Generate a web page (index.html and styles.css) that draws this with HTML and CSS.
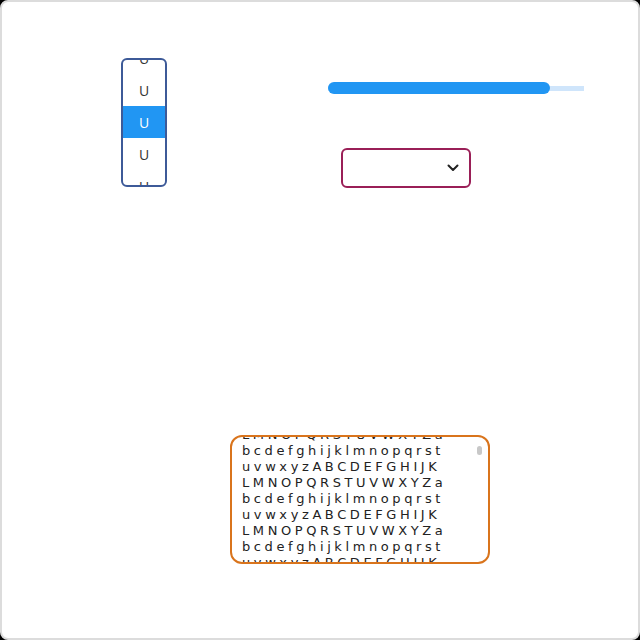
FILE: index.html
```html
<!DOCTYPE html>
<html>
<head>
<meta charset="utf-8">
<link rel="stylesheet" href="styles.css">
</head>
<body>
<div class="frame">
  <div class="top">
    <div class="listbox">
      <div class="options">
        <div class="opt">U</div>
        <div class="opt">U</div>
        <div class="opt sel">U</div>
        <div class="opt">U</div>
        <div class="opt">U</div>
      </div>
    </div>
    <div class="right">
      <div class="progress">
        <div class="fill" style="width: 222px"></div>
      </div>
      <div class="select">
        <svg class="chev" width="12" height="8" viewBox="0 0 12 8"><path d="M1.5 1.5 L6 6 L10.5 1.5" fill="none" stroke="#222" stroke-width="2" stroke-linecap="round" stroke-linejoin="round"/></svg>
      </div>
    </div>
  </div>
  <div class="textarea">
    <div class="text">LMNOPQRSTUVWXYZa<br>bcdefghijklmnopqrst<br>uvwxyzABCDEFGHIJK<br>LMNOPQRSTUVWXYZa<br>bcdefghijklmnopqrst<br>uvwxyzABCDEFGHIJK<br>LMNOPQRSTUVWXYZa<br>bcdefghijklmnopqrst<br>uvwxyzABCDEFGHIJK</div>
    <div class="thumb"></div>
  </div>
</div>
</body>
</html>
```

FILE: styles.css
```css
html { background: #000; }
body { margin: 0; }
.frame {
  box-sizing: border-box;
  width: 640px;
  height: 640px;
  background: #fff;
  border: 2px solid #dcdcdc;
  border-radius: 8px;
  overflow: hidden;
}
.top {
  display: flex;
  align-items: flex-start;
  margin-top: 56px;
  padding-left: 119px;
}
.listbox {
  box-sizing: border-box;
  width: 46px;
  height: 129px;
  border: 2px solid #3d5a98;
  border-radius: 6px;
  overflow: hidden;
}
.options { margin-top: -18px; }
.opt {
  height: 32px;
  display: flex;
  align-items: center;
  justify-content: center;
  font-family: "Open Sans", sans-serif;
  font-size: 14px;
  color: #333;
}
.opt.sel { background: #2196f3; color: #fff; }
.right {
  margin-left: 161px;
  padding-top: 24px;
}
.progress {
  width: 256px;
  height: 12px;
  display: flex;
  align-items: center;
  background: linear-gradient(#fff 4px, #cfe5fb 4px, #cfe5fb 9px, #fff 9px);
}
.fill {
  height: 12px;
  background: #2196f3;
  border-radius: 6px;
}
.select {
  box-sizing: border-box;
  width: 130px;
  height: 40px;
  margin-top: 54px;
  margin-left: 13px;
  border: 2px solid #9a1f57;
  border-radius: 6px;
  display: flex;
  align-items: center;
  justify-content: flex-end;
  padding-right: 10px;
}
.chev { display: block; }
.textarea {
  position: relative;
  box-sizing: border-box;
  width: 260px;
  height: 129px;
  margin-top: 247px;
  margin-left: 228px;
  border: 2px solid #d9741c;
  border-radius: 12px;
  overflow: hidden;
  padding: 0 10px;
}
.text {
  margin-top: -10px;
  font-family: "DejaVu Sans", sans-serif;
  font-size: 13px;
  line-height: 16px;
  letter-spacing: 3.6px;
  color: #222;
  white-space: nowrap;
}
.thumb {
  position: absolute;
  top: 9px;
  right: 6px;
  width: 5px;
  height: 9px;
  border-radius: 3px;
  background: #c8c8c8;
}
```
